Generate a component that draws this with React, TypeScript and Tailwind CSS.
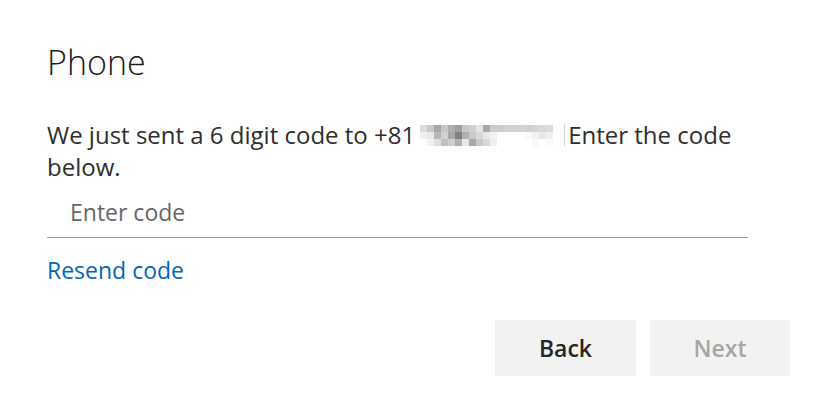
import * as React from 'react';

const maskRows = [
    ['bg-[#dcdcdc]', 'bg-[#c8c8c8]', 'bg-[#a8a8a8]', 'bg-[#c8c8c8]', 'bg-[#b0b0b0]', 'bg-[#a0a0a0]', 'bg-[#c8c8c8]', 'bg-[#d0d0d0]', 'bg-[#e4e4e4]', 'bg-[#a8a8a8]', 'bg-[#cccccc]', 'bg-[#cccccc]', 'bg-[#d0d0d0]', 'bg-[#d0d0d0]', 'bg-[#d4d4d4]', 'bg-[#d0d0d0]', 'bg-[#d4d4d4]', 'bg-[#d8d8d8]', 'bg-[#dcdcdc]'],
    ['bg-[#f0f0f0]', 'bg-[#e8e8e8]', 'bg-[#b8b8b8]', 'bg-[#d0d0d0]', 'bg-[#a8a8a8]', 'bg-[#808080]', 'bg-[#b0b0b0]', 'bg-[#c8c8c8]', 'bg-[#d8d8d8]', 'bg-[#e8e8e8]', 'bg-[#f2f2f2]', 'bg-white', 'bg-white', 'bg-white', 'bg-white', 'bg-[#fafafa]', 'bg-[#f2f2f2]', 'bg-[#e8e8e8]', 'bg-[#f0f0f0]'],
    ['bg-white', 'bg-[#f2f2f2]', 'bg-[#e0e0e0]', 'bg-[#c0c0c0]', 'bg-[#d0d0d0]', 'bg-[#b0b0b0]', 'bg-[#e8e8e8]', 'bg-[#a8a8a8]', 'bg-[#c8c8c8]', 'bg-[#d8d8d8]', 'bg-[#f0f0f0]', 'bg-white', 'bg-white', 'bg-white', 'bg-white', 'bg-white', 'bg-[#f8f8f8]', 'bg-white', 'bg-[#fafafa]'],
];

// pixelated phone number
const Mask = () => (
    <span className="inline-flex items-center align-top h-[32px] ml-[5px] mr-[3px]">
        <span className="inline-flex flex-col">
            {maskRows.map((row, i) => (
                <span key={i} className="flex">
                    {row.map((c, j) => (
                        <span key={j} className={`block w-[7px] h-[7px] ${c}`} />
                    ))}
                </span>
            ))}
        </span>
        <span className="block w-px h-[22px] bg-[#d4d4d4] ml-[11px]" />
    </span>
);

const App = () => {
    return (
        <div className="w-[834px] h-[407px] bg-white font-['Open_Sans','Noto_Sans',sans-serif] pl-[47px] pt-[38px]">
            <h1 className="text-[34px] font-light leading-[48px] text-[#1b1b1b]">
                Phone
            </h1>

            <p className="mt-[33px] w-[720px] text-[24px] leading-[32px] text-[#2e2e2e]">
                We just sent a 6 digit code to +81<Mask />Enter the code below.
            </p>

            <div className="w-[701px] mt-[13px] border-b border-[#a0a0a0] pl-[23px] pb-[9px]">
                <span className="block text-[23px] leading-[32px] text-[#666666]">Enter code</span>
            </div>

            <div className="mt-[16px]">
                <a className="text-[23px] text-[#0067b8] leading-[32px]">Resend code</a>
            </div>

            <div className="flex justify-end gap-[14px] w-[743px] mt-[34px]">
                <button className="w-[141px] h-[56px] bg-[#f2f2f2] text-[23px] font-semibold text-[#262626]">
                    Back
                </button>
                <button className="w-[140px] h-[56px] bg-[#f2f2f2] text-[23px] font-semibold text-[#a6a6a6]" disabled>
                    Next
                </button>
            </div>
        </div>
    )
}
export default App
